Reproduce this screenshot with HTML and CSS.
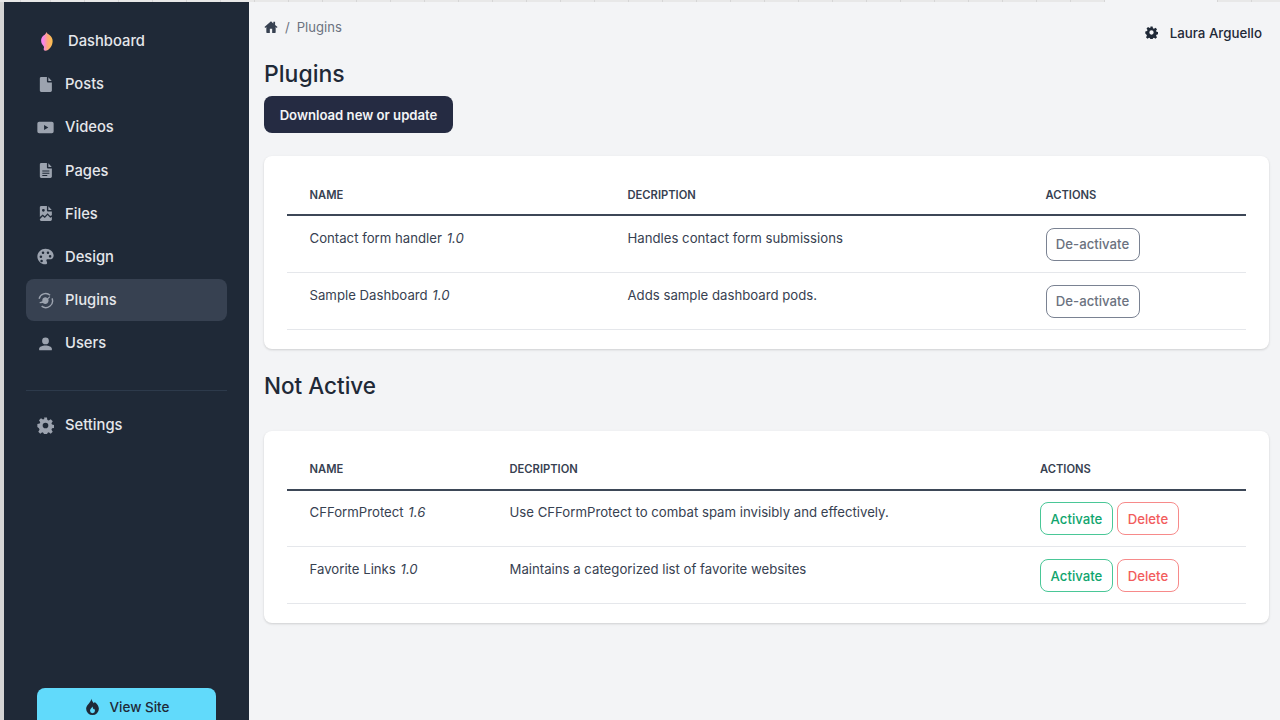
FILE: index.html
```html
<!DOCTYPE html>
<html lang="en">
<head>
<meta charset="utf-8">
<title>Plugins</title>
<link rel="stylesheet" href="styles.css">
</head>
<body>
<div class="tabstrip">
  <i class="t1"></i><i class="t2"></i><i></i><i></i><i></i><i></i><i></i><i></i><i></i><i></i><i></i><i></i><i></i><i></i><i></i><i></i><i></i><i></i><i></i><i></i><i></i><i></i><i></i><i></i><i></i><i></i><i></i><i></i><i></i><i></i><i></i><i></i><i></i><i class="tab-open"></i><i></i><i></i>
</div>
<div class="app">
  <aside class="sidebar">
    <nav class="nav">
      <a class="nav-item nav-brand">
        <svg class="brand" viewBox="0 0 12 19"><defs><linearGradient id="bg" x1="0" x2="1" y1="0" y2="0"><stop offset="0.2" stop-color="#f884ea"/><stop offset="0.55" stop-color="#fca67c"/><stop offset="1" stop-color="#fcc24a"/></linearGradient></defs><path fill="url(#bg)" d="M5.500 0 C6 1.500 7 2 8.500 3 C11 4.800 12 7.500 11.500 10.500 C11 14.500 8 18.500 4.500 18.800 C2.500 19 2.500 17 3 15.500 C3.200 14.500 2 13.500 1 12 C-.3 10 -.2 6.500 1.500 4.500 C2.800 3 4.800 2.500 5.500 0 Z"/></svg>
        <span>Dashboard</span>
      </a>
      <a class="nav-item">
        <svg class="ico" viewBox="0 0 24 24"><path d="M6 1.500h8v6.200c0 .7.600 1.300 1.300 1.300H21v11.500c0 1.200-1 2-2 2H6c-1.200 0-2-.8-2-2v-17c0-1.200.8-2 2-2zM16 1.800 20.800 7H16z"/></svg>
        <span>Posts</span>
      </a>
      <a class="nav-item">
        <svg class="ico" viewBox="0 0 24 24"><path fill-rule="evenodd" d="M3 4h18a2.500 2.500 0 0 1 2.500 2.500v11A2.500 2.500 0 0 1 21 20H3a2.500 2.500 0 0 1-2.500-2.500v-11A2.500 2.500 0 0 1 3 4zm7 4.500v7l6-3.500z"/></svg>
        <span>Videos</span>
      </a>
      <a class="nav-item">
        <svg class="ico" viewBox="0 0 24 24"><path fill-rule="evenodd" d="M6 1.500h8v6.200c0 .7.600 1.300 1.300 1.300H21v11.500c0 1.200-1 2-2 2H6c-1.200 0-2-.8-2-2v-17c0-1.200.8-2 2-2zM7.500 12v1.500h10V12zm0 3.200v1.500h10v-1.500zm0 3.200v1.500h7v-1.500zM16 1.800 20.800 7H16z"/></svg>
        <span>Pages</span>
      </a>
      <a class="nav-item">
        <svg class="ico" viewBox="0 0 24 24"><path fill-rule="evenodd" d="M6 1.500h8v6.200c0 .7.600 1.300 1.300 1.300H21v5.500l-2.500 1-3.500-4-4 4.500-3-2.500-4 3.500V3.500c0-1.200.8-2 2-2zM9 5.500a2 2 0 1 0 0 4 2 2 0 0 0 0-4zM16 1.800 20.800 7H16zM4 20v.500c0 1.200.8 2 2 2h13c1 0 2-.8 2-2v-3.500l-2.300 1-3.700-4-4 4.500-3-2.500z"/></svg>
        <span>Files</span>
      </a>
      <a class="nav-item">
        <svg class="ico" viewBox="0 0 24 24"><path fill-rule="evenodd" d="M12 1c6.300 0 11.500 4.300 11.500 9.800 0 3.200-2.500 5.200-5.500 5.200h-3c-1.500 0-2.200 1.300-1.600 2.500.5 1 .9 1.600.9 2.500 0 1.300-1 2-2.300 2C5.500 23 .5 18 .5 12S5.700 1 12 1zM5.500 10.500a1.800 1.800 0 1 0 0 3.600 1.800 1.800 0 0 0 0-3.600zm3-5.500a1.800 1.800 0 1 0 0 3.600 1.800 1.800 0 0 0 0-3.600zm7 0a1.800 1.800 0 1 0 0 3.600 1.800 1.800 0 0 0 0-3.600zm3 5a1.800 1.800 0 1 0 0 3.600 1.800 1.800 0 0 0 0-3.600zM6.500 16.500a1.800 1.800 0 1 0 0 3.600 1.800 1.800 0 0 0 0-3.600z"/></svg>
        <span>Design</span>
      </a>
      <a class="nav-item active">
        <svg class="ico" viewBox="0 0 24 24"><path class="swirl" d="M3 9.500A9.500 9.500 0 0 1 18.500 4.500M21.200 9A9.500 9.500 0 0 1 6.500 20"/><path d="M11.500 7.500a5 5 0 0 1 3.200 1.200l3-2.700 1 1-2.800 2.900a5 5 0 0 1-3.900 7.100c-1.500 0-2.800-.6-3.700-1.500L4 16l-.5-1.500 4-1.500a5 5 0 0 1 4-5.500z"/></svg>
        <span>Plugins</span>
      </a>
      <a class="nav-item">
        <svg class="ico ico-user" viewBox="0 0 24 24"><path d="M12 3.500a4.800 4.800 0 1 1 0 9.600 4.800 4.800 0 0 1 0-9.600zM12 14.800c4.500 0 9 1.900 9 4.500v1.400c0 .5-.4.800-.8.800H3.800c-.4 0-.8-.3-.8-.8v-1.400c0-2.600 4.500-4.500 9-4.500z"/></svg>
        <span>Users</span>
      </a>
    </nav>
    <hr class="nav-rule">
    <nav class="nav">
      <a class="nav-item">
        <svg class="ico" viewBox="0 0 24 24"><path fill-rule="evenodd" d="M10 .8h4l.7 3.300 1.900.8 2.800-1.800 2.800 2.800-1.800 2.800.8 1.900 3.300.7v4l-3.300.7-.8 1.900 1.800 2.800-2.800 2.800-2.800-1.800-1.900.8-.7 3.300h-4l-.7-3.300-1.900-.8-2.800 1.800-2.800-2.800 1.800-2.800-.8-1.900L.5 14v-4l3.300-.7.8-1.900-1.800-2.800 2.800-2.800 2.800 1.800 1.900-.8zM12 8a4 4 0 1 0 0 8 4 4 0 0 0 0-8z"/></svg>
        <span>Settings</span>
      </a>
    </nav>
    <a class="view-site">
      <svg class="flame" viewBox="0 0 24 24"><path fill-rule="evenodd" d="M10.500 1c.5 3.500 2.500 5 3.500 6.500l1.200-1.800C18.500 8 21 12 21 15a9 9 0 0 1-18 0c0-5 6.500-8 7.500-14zM12 12c-1 2-3.500 3.500-3.500 6a3.500 3.500 0 0 0 7 0c0-1.200-.5-2.200-1.200-3l-.9 1c-.5-1.200-1.200-2.500-1.400-4z"/></svg>
      <span>View Site</span>
    </a>
  </aside>
  <main class="main">
    <div class="topbar">
      <div class="crumbs">
        <svg class="home" viewBox="0 0 24 24"><path d="M12 2 .8 12.200l1.400 1.500L4 12.200v9c0 .6.400 1 1 1h5v-7h4v7h5c.6 0 1-.4 1-1v-9l1.800 1.500 1.400-1.500L19 8.500V3h-3v2.800z"/></svg>
        <span class="crumb-sep">/</span>
        <span>Plugins</span>
      </div>
      <div class="user">
        <svg class="user-gear" viewBox="0 0 24 24"><path fill-rule="evenodd" d="M10 .8h4l.7 3.300 1.900.8 2.800-1.800 2.800 2.800-1.800 2.800.8 1.900 3.300.7v4l-3.300.7-.8 1.900 1.800 2.800-2.800 2.800-2.800-1.800-1.900.8-.7 3.300h-4l-.7-3.300-1.900-.8-2.800 1.800-2.800-2.800 1.800-2.800-.8-1.900L.5 14v-4l3.300-.7.8-1.900-1.800-2.800 2.800-2.800 2.800 1.800 1.900-.8zM12 8a4 4 0 1 0 0 8 4 4 0 0 0 0-8z"/></svg>
        <span>Laura Arguello</span>
      </div>
    </div>
    <h1 class="title">Plugins</h1>
    <a class="btn-primary">Download new or update</a>
    <section class="card">
      <table class="tbl tbl-active">
        <thead><tr><th class="col-name">NAME</th><th class="col-desc">DECRIPTION</th><th>ACTIONS</th></tr></thead>
        <tbody>
          <tr><td>Contact form handler <em>1.0</em></td><td>Handles contact form submissions</td><td><a class="btn btn-grey">De-activate</a></td></tr>
          <tr><td>Sample Dashboard <em>1.0</em></td><td>Adds sample dashboard pods.</td><td><a class="btn btn-grey">De-activate</a></td></tr>
        </tbody>
      </table>
    </section>
    <h2 class="subtitle">Not Active</h2>
    <section class="card">
      <table class="tbl tbl-inactive">
        <thead><tr><th class="col-name">NAME</th><th class="col-desc">DECRIPTION</th><th>ACTIONS</th></tr></thead>
        <tbody>
          <tr><td>CFFormProtect <em>1.6</em></td><td>Use CFFormProtect to combat spam invisibly and effectively.</td><td><div class="btns"><a class="btn btn-green">Activate</a><a class="btn btn-red">Delete</a></div></td></tr>
          <tr><td>Favorite Links <em>1.0</em></td><td>Maintains a categorized list of favorite websites</td><td><div class="btns"><a class="btn btn-green">Activate</a><a class="btn btn-red">Delete</a></div></td></tr>
        </tbody>
      </table>
    </section>
  </main>
</div>
</body>
</html>
```
FILE: styles.css
```css
* { box-sizing: border-box; }
html, body { margin: 0; padding: 0; height: 720px; overflow: hidden; }
body { font-family: Inter, "Liberation Sans", sans-serif; background: #f3f4f6; color: #374151; display: flex; flex-direction: column; }

.tabstrip { height: 2px; flex: none; display: flex; background: #e8e8e8; }
.tabstrip i { width: 34px; flex: none; border-right: 1px solid #d6d6d6; }
.tabstrip i.t1 { width: 21px; }
.tabstrip i.t2 { width: 30px; }
.tabstrip i.tab-open { width: 113px; background: #f3f4f6; }

.app { flex: 1; display: flex; min-height: 0; border-left: 4px solid #d4d4d4; }

.sidebar { width: 245px; flex: none; background: #1f2937; padding: 18.600px 22px 0; display: flex; flex-direction: column; overflow: hidden; }
.nav { display: flex; flex-direction: column; gap: 2px; }
.nav-item { height: 41.150px; flex: none; display: flex; align-items: center; gap: 11.500px; padding-left: 10.500px; border-radius: 8px; color: #e5e7eb; font-size: 14.750px; font-weight: 500; }
.nav-item.active { background: #374151; }
.nav-brand { gap: 15px; padding-left: 15px; }
.brand { width: 12px; height: 19px; flex: none; }
.ico { width: 17px; height: 17px; flex: none; fill: #9ca3af; }
.swirl { fill: none; stroke: #9ca3af; stroke-width: 2; }
.nav-rule { width: 100%; height: 1px; flex: none; margin: 26px 0 14px; border: 0; background: #2d3a4b; }

.view-site { margin: auto 11px 0; height: 40px; position: relative; top: 8px; flex: none; background: #61dafb; border-radius: 8px 8px 0 0; display: flex; align-items: center; justify-content: center; gap: 9px; color: #1f2937; font-size: 13.500px; font-weight: 500; padding-bottom: 3px; }
.flame { width: 17px; height: 17px; fill: #1f2937; }

.main { flex: 1; min-width: 0; padding: 0 11px 0 15px; display: flex; flex-direction: column; align-items: stretch; }
.topbar { height: 45px; flex: none; display: flex; justify-content: space-between; align-items: flex-start; }
.crumbs { display: flex; align-items: center; gap: 7px; font-size: 13.100px; color: #6b7280; margin-top: 16.500px; height: 17px; }
.home { width: 14px; height: 14px; fill: #374151; }
.user { display: flex; align-items: center; gap: 12px; font-size: 13.300px; font-weight: 500; color: #1f2937; margin: 22px 7px 0 0; height: 17px; }
.user-gear { width: 13px; height: 13px; fill: #1f2937; }

.title { margin: 13px 0 8px; font-size: 23px; line-height: 28px; font-weight: 500; color: #1f2937; }
.btn-primary { align-self: flex-start; width: 189px; height: 37px; display: flex; align-items: center; justify-content: center; background: #252b42; color: #f3f4f6; border-radius: 8px; font-size: 13.150px; font-weight: 600; }

.card { background: #fff; border-radius: 8px; box-shadow: 0 1px 3px rgba(0,0,0,.1), 0 1px 2px rgba(0,0,0,.06); padding: 19px 23px; margin-top: 23px; flex: none; }
.subtitle { margin: 23px 0 8px; font-size: 22.500px; line-height: 28px; font-weight: 500; color: #1f2937; }

.tbl { width: 100%; border-collapse: collapse; table-layout: fixed; font-size: 13.200px; }
.tbl th { height: 40px; padding: 0 0 0 22.500px; text-align: left; font-size: 11.200px; font-weight: 600; color: #374151; border-bottom: 2px solid #3d4757; }
.tbl td { height: 57px; padding: 0 0 12px 22.500px; text-align: left; vertical-align: middle; border-bottom: 1px solid #e5e7eb; color: #374151; }
.tbl td:last-child { padding-bottom: 0; padding-top: 1px; }
.tbl em { margin-left: 1px; }
.tbl-active .col-name { width: 318px; }
.tbl-active .col-desc { width: 418px; }
.tbl-inactive .col-name { width: 200px; }
.tbl-inactive .col-desc { width: 530.500px; }

.btns { display: flex; gap: 4px; }
.btn { display: inline-flex; align-items: center; justify-content: center; height: 33px; border-radius: 8px; border: 1px solid; font-size: 13.200px; font-weight: 500; background: #fff; vertical-align: middle; }
.btn-grey { width: 94px; color: #6b7280; border-color: #7a8292; }
.btn-green { width: 73px; color: #10a56e; border-color: #4ac797; }
.btn-red { width: 62px; color: #f25c5c; border-color: #f78a8a; }
```
